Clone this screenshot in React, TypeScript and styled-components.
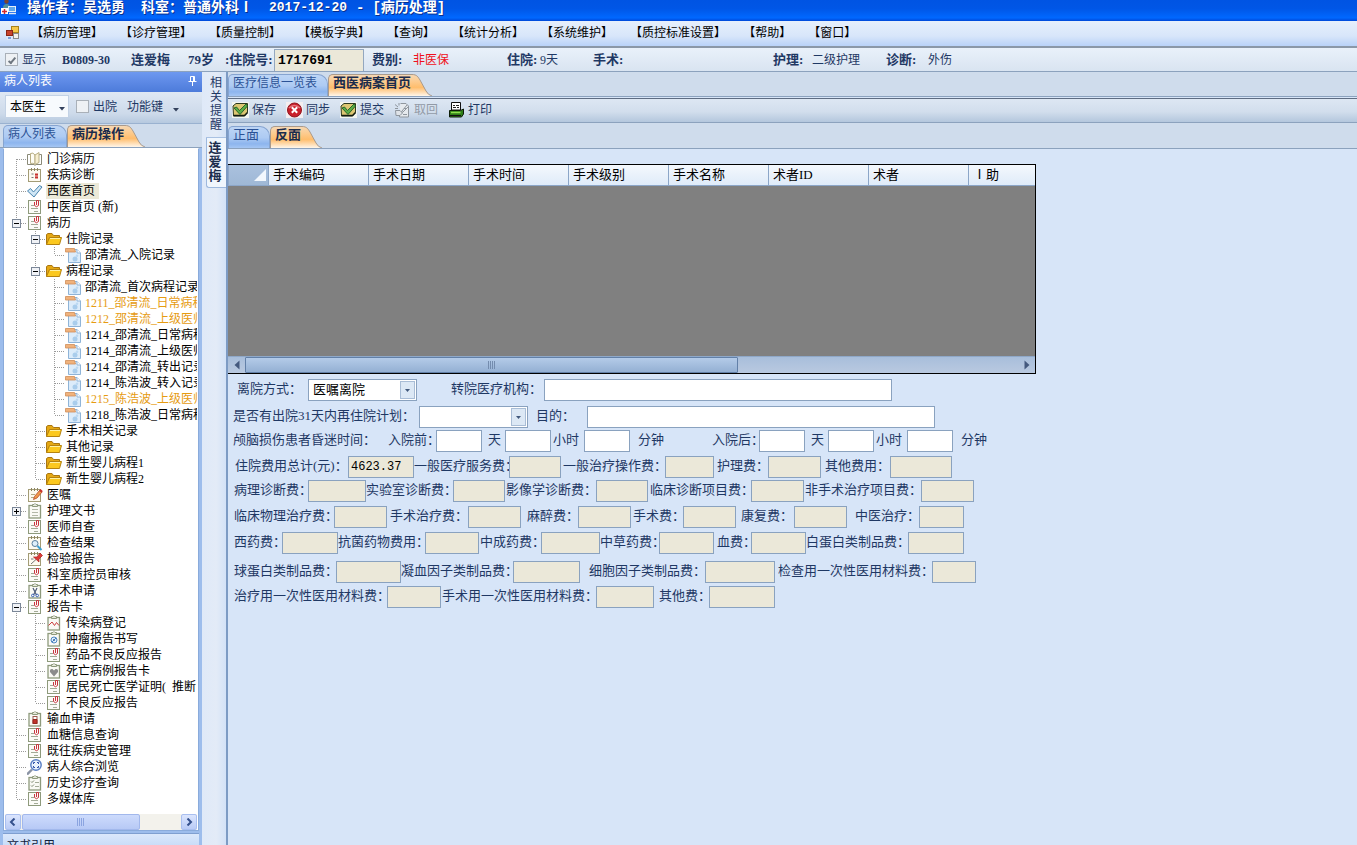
import React from "react";
import styled, { createGlobalStyle, css } from "styled-components";

const GlobalStyle = createGlobalStyle`
  *, *::before, *::after { box-sizing: border-box; }
  html, body { margin: 0; padding: 0; }
  body {
    background: #d7e5f8;
    color: #1f3864;
    font: 12px/16px "Liberation Serif", "Noto Sans CJK SC", sans-serif;
    overflow: hidden;
  }
  button, input, select { font: inherit; color: inherit; margin: 0; border-radius: 0; }
  button { padding: 0; border: 0; background: none; }
  svg { flex: none; }
`;

const Page = styled.div`
  display: flex;
  flex-direction: column;
  height: 100vh;
  overflow: hidden;
  white-space: nowrap;
`;

/* ---------- window title and main menu ---------- */

const TitleBar = styled.header`
  display: flex;
  flex: none;
  height: 21px;
  padding-left: 1px;
  color: #fff;
  font-size: 14px;
  line-height: 16px;
  font-weight: bold;
  font-family: "Liberation Mono", "Noto Sans CJK SC", monospace;
  background: linear-gradient(#0054e3, #0056e6 40%, #0068ff 85%, #0048d8);
  text-shadow: 1px 1px 0 #0a2f8c;
  svg { margin-right: 10px; }
`;

const TitlePart = styled.span`
  margin-right: 16px;
`;

const TitleDate = styled.span`
  font-size: 13px;
  margin-right: 9px;
`;

const TitleDash = styled.span`
  margin-right: 8px;
`;

const MenuBar = styled.nav`
  display: flex;
  flex: none;
  align-items: center;
  gap: 17px;
  height: 27px;
  padding: 0 0 2px 6px;
  color: #000;
  border-bottom: 2px solid #8b98a8;
  background: linear-gradient(#e6effc, #d8e6fa 60%, #b9d2f8);
`;

const MenuIcon = styled.span`
  display: flex;
  width: 8px;
`;

const MenuButton = styled.button`
  line-height: 20px;
`;

/* ---------- patient summary ---------- */

const PatientBar = styled.section`
  display: grid;
  flex: none;
  grid-template-columns: 57px 69px 57px 37px 49px 98px 41px 94px 33px 53px 180px 39px 74px 42px 1fr;
  align-items: center;
  height: 24px;
  padding-left: 5px;
  background: linear-gradient(#e9f1fa, #d9e4f1);
  border-bottom: 1px solid #8ca2bd;
`;

const Strong = styled.span`
  font-size: 13px;
  font-weight: bold;
`;

const BedNo = styled.span`
  font-weight: bold;
`;

const Red = styled.span`
  color: #f01020;
`;

const CheckLabel = styled.label`
  display: flex;
  align-items: center;
  gap: 4px;
`;

const CheckBox = styled.input`
  appearance: none;
  flex: none;
  width: 13px;
  height: 13px;
  border: 1px solid #a9b0b8;
  background: #eef1f4;
  display: grid;
  place-items: center;
  &:checked::before {
    content: "";
    width: 4px;
    height: 8px;
    border: solid #6f7780;
    border-width: 0 2px 2px 0;
    transform: rotate(40deg);
  }
`;

const AdmissionInput = styled.input`
  width: 90px;
  height: 22px;
  padding: 0 3px;
  border: 1px solid #93a7bf;
  border-bottom: 0;
  background: #ebe8d9;
  color: #000;
  font: bold 13px/18px "Liberation Mono", monospace;
`;

/* ---------- body ---------- */

const Body = styled.div`
  display: flex;
  flex: 1;
  min-height: 0;
`;

const Side = styled.aside`
  display: flex;
  flex: none;
  flex-direction: column;
  width: 202px;
  overflow: hidden;
  background: #9dbdec;
`;

const SideHeader = styled.div`
  display: flex;
  flex: none;
  align-items: center;
  justify-content: space-between;
  height: 20px;
  padding: 0 5px 2px 4px;
  color: #fff;
  background: linear-gradient(#6d98f0, #4d7bda);
`;

const SideTools = styled.div`
  display: flex;
  flex: none;
  align-items: center;
  height: 32px;
  padding: 0 0 2px 5px;
  background: linear-gradient(#dfe8f4, #cddaea 70%, #b6c9df);
  border-bottom: 1px solid #9ab2d0;
`;

const DoctorSelect = styled.span`
  position: relative;
  margin-right: 7px;
  select {
    appearance: none;
    display: block;
    width: 64px;
    height: 23px;
    padding: 0 4px;
    color: #000;
    background: #f7fafd;
    border: 1px solid #c3d2e5;
  }
  svg { position: absolute; right: 4px; top: 12px; pointer-events: none; }
`;

const FunctionButton = styled.button`
  display: flex;
  align-items: center;
  gap: 10px;
  margin-left: 10px;
  svg { margin-top: 6px; }
`;

/* ---------- tabs ---------- */

const TabStrip = styled.div<{ $h: number; $in?: number }>`
  display: flex;
  flex: none;
  align-items: flex-end;
  height: ${(p) => p.$h}px;
  padding-left: ${(p) => p.$in ?? 0}px;
  background: #cfdcec;
  border-bottom: 1px solid #8ca2bd;
`;

const TabShape = styled.button<{ $on?: boolean; $large?: boolean }>`
  position: relative;
  height: 22px;
  padding: 0 4px 6px;
  border: 1px solid #86a4d0;
  border-bottom: 0;
  border-top-left-radius: 5px;
  color: #2b5296;
  font-size: ${(p) => (p.$large ? 13 : 12)}px;
  line-height: 16px;
  background: linear-gradient(#bdd5f5, #aecbf3 50%, #8db5ee 80%, #a5c6f3);
  ${(p) =>
    p.$on
      ? css`
          z-index: 1;
          margin-right: 18px;
          border-color: #a99a8c;
          border-right: 0;
          padding-right: 1px;
          color: #1b2c4c;
          font-size: 13px;
          font-weight: bold;
          background: linear-gradient(#f6d8b4, #fdca8b 35%, #ffbd6c 60%, #fff6ea);
        `
      : css`
          padding-right: 10px;
          border-top-right-radius: 10px;
        `}
  svg { position: absolute; left: 100%; top: -1px; }
`;

function Tab({ on, large, children }: { on?: boolean; large?: boolean; children: string }) {
  const id = React.useId();
  return (
    <TabShape type="button" $on={on} $large={large}>
      {children}
      {on && (
        <svg width="20" height="22" viewBox="0 0 20 22">
          <defs>
            <linearGradient id={id} x1="0" y1="0" x2="0" y2="1">
              <stop offset="0" stopColor="#f6d8b4" />
              <stop offset=".35" stopColor="#fdca8b" />
              <stop offset=".6" stopColor="#ffbd6c" />
              <stop offset="1" stopColor="#fff6ea" />
            </linearGradient>
          </defs>
          <path d="M0 .5C5 .5 6 3 8 6L14 17Q16 21 20 22H0Z" fill={`url(#${id})`} />
          <path d="M0 .5C5 .5 6 3 8 6L14 17Q16 21 20 22" fill="none" stroke="#a99a8c" />
        </svg>
      )}
    </TabShape>
  );
}

/* ---------- record tree ---------- */

type Kind =
  | "book" | "calendar" | "check" | "clip" | "folder" | "doc" | "pencil" | "board" | "search"
  | "pin" | "scissors" | "chart" | "target" | "heart" | "blood" | "lens" | "list";

type Node = {
  text: string;
  icon: Kind;
  open?: boolean;
  closed?: boolean;
  selected?: boolean;
  amber?: boolean;
  kids?: Node[];
};

const doc = (text: string, amber = false): Node => ({ text, icon: "doc", amber });

const records: Node[] = [
  { text: "门诊病历", icon: "book" },
  { text: "疾病诊断", icon: "calendar" },
  { text: "西医首页", icon: "check", selected: true },
  { text: "中医首页 (新)", icon: "clip" },
  {
    text: "病历", icon: "clip", open: true,
    kids: [
      { text: "住院记录", icon: "folder", open: true, kids: [doc("邵清流_入院记录")] },
      {
        text: "病程记录", icon: "folder", open: true,
        kids: [
          doc("邵清流_首次病程记录"),
          doc("1211_邵清流_日常病程", true),
          doc("1212_邵清流_上级医师", true),
          doc("1214_邵清流_日常病程"),
          doc("1214_邵清流_上级医师"),
          doc("1214_邵清流_转出记录"),
          doc("1214_陈浩波_转入记录"),
          doc("1215_陈浩波_上级医师", true),
          doc("1218_陈浩波_日常病程"),
        ],
      },
      { text: "手术相关记录", icon: "folder" },
      { text: "其他记录", icon: "folder" },
      { text: "新生婴儿病程1", icon: "folder" },
      { text: "新生婴儿病程2", icon: "folder" },
    ],
  },
  { text: "医嘱", icon: "pencil" },
  { text: "护理文书", icon: "board", closed: true },
  { text: "医师自查", icon: "clip" },
  { text: "检查结果", icon: "search" },
  { text: "检验报告", icon: "pin" },
  { text: "科室质控员审核", icon: "clip" },
  { text: "手术申请", icon: "scissors" },
  {
    text: "报告卡", icon: "clip", open: true,
    kids: [
      { text: "传染病登记", icon: "chart" },
      { text: "肿瘤报告书写", icon: "target" },
      { text: "药品不良反应报告", icon: "clip" },
      { text: "死亡病例报告卡", icon: "heart" },
      { text: "居民死亡医学证明(  推断", icon: "clip" },
      { text: "不良反应报告", icon: "clip" },
    ],
  },
  { text: "输血申请", icon: "blood" },
  { text: "血糖信息查询", icon: "clip" },
  { text: "既往疾病史管理", icon: "clip" },
  { text: "病人综合浏览", icon: "lens" },
  { text: "历史诊疗查询", icon: "list" },
  { text: "多媒体库", icon: "clip" },
];

const TreePane = styled.div`
  display: flex;
  flex: none;
  flex-direction: column;
  margin: 0 3px 0 3px;
  padding: 2px 1px 0;
  border: 1px solid #8aabdb;
  border-top-color: #fff;
  background: #fff;
`;

const TreeList = styled.ul`
  list-style: none;
  margin: 0 0 7px;
  padding: 0 0 0 2px;
  color: #000;
  overflow: hidden;
`;

const SubList = styled.ul`
  list-style: none;
  margin: 0;
  padding: 0;
`;

const TreeRow = styled.div<{ $amber?: boolean }>`
  display: flex;
  align-items: center;
  height: 16px;
  color: ${(p) => (p.$amber ? "#e69b12" : "#000")};
`;

const TreeText = styled.span<{ $on?: boolean }>`
  margin-left: 3px;
  padding: 0 4px 0 1px;
  line-height: 16px;
  white-space: pre;
  background: ${(p) => (p.$on ? "#ece9d8" : "transparent")};
`;

const GlyphSvg = styled.svg`
  margin-left: 1px;
`;

function Guide({ up, down, branch, box }: { up: boolean; down: boolean; branch?: boolean; box?: "+" | "-" }) {
  const line = { stroke: "#9a9a9a", strokeDasharray: "1 1" };
  return (
    <svg width="19" height="16" viewBox="0 0 19 16" shapeRendering="crispEdges">
      {up && <path d="M9.5 0V8" {...line} />}
      {down && <path d="M9.5 8V16" {...line} />}
      {branch && <path d="M10 8.5H19" {...line} />}
      {box && (
        <>
          <rect x="5.5" y="4.5" width="8" height="8" fill="#f0f2f6" stroke="#7b8798" />
          <path d={box === "+" ? "M7 8.5H12M9.5 6V11" : "M7 8.5H12"} stroke="#000" />
        </>
      )}
    </svg>
  );
}

const Paper = () => (
  <>
    <rect x="1.5" y="1.5" width="12" height="13" fill="#fbfbf7" stroke="#8e9a7c" />
    <path d="M4 6.5H7M4 9.5H11M7 12.5H11" stroke="#a3aa97" />
  </>
);

const Board = () => (
  <>
    <rect x="2" y="2.5" width="11.5" height="12.500" fill="#fafaf5" stroke="#8e9a7c" strokeWidth="1.300" />
    <path d="M5.5 3.5V1.5H7L8 .5L9 1.5H10.500V3.500Z" fill="#e6e8dc" stroke="#8e9a7c" />
  </>
);

const Pad = () => (
  <>
    <rect x="1.500" y="2.500" width="12" height="12" fill="#fdfaf0" stroke="#a39c76" />
    <path d="M4.500 1V4M7.500 1V4M10.500 1V4" stroke="#8c8560" />
  </>
);

const drawings: Record<Kind, React.ReactNode> = {
  book: (
    <>
      <path d="M.5 3.500H3L8 5L13 3.500H14.500V13.500H9L8 14.500L7 13.500H.5Z" fill="#fff" stroke="#8a8a78" />
      <path d="M3.500 2.500Q6 1 8 4V13.500Q6 11.500 3.500 12.500Z" fill="#fffdf4" stroke="#b8ae84" />
      <path d="M8 4L12 1.500V11.500L8 13.500Z" fill="#f8efd0" stroke="#b8ae84" />
    </>
  ),
  calendar: (
    <>
      <Pad />
      <path d="M4.500 7H6.500M4.500 10.500H6.500" stroke="#777" />
      <path d="M8 6.500H11V11.500H8Z" fill="#c8322c" />
      <path d="M8 9H11" stroke="#fff" strokeWidth=".7" />
    </>
  ),
  check: <path d="M.5 8L3.500 5.500L6.500 9L12.500 2.500L15 4L7 14Z" fill="#cfe6f5" stroke="#4683ae" />,
  clip: (
    <>
      <Paper />
      <path d="M7.500 3V6.500Q9.500 9 11.500 6.500V1.500H9.500V6" fill="none" stroke="#c8343f" />
    </>
  ),
  folder: (
    <>
      <path d="M.5 13.500V3.500L2 2.500H6L7.500 4.500H13.500V7" fill="#e5a814" stroke="#a97611" />
      <path d="M.5 13.500L3.500 6.500H15.500L13.500 13.500Z" fill="#fbc81f" stroke="#b5820f" />
      <path d="M4 7.500H14" stroke="#fff0a0" />
    </>
  ),
  doc: (
    <>
      <path d="M3.500 2.500H12L15.500 6V15.500H3.500Z" fill="#dcecfa" stroke="#8fb4d8" />
      <path d="M12 2.500V6H15.500" fill="#fff" stroke="#8fb4d8" />
      <path d="M.5 1.500H9.500L10.500 5H.5Z" fill="#f0b27c" stroke="#cf8e58" strokeWidth=".8" />
      <circle cx="10" cy="12" r="2.500" fill="#a9cdec" />
      <circle cx="12" cy="8.800" r="1.300" fill="#bcd9f2" />
    </>
  ),
  pencil: (
    <>
      <Pad />
      <path d="M4 7.500H8M4 10.500H7" stroke="#b4ab84" />
      <path d="M6.500 12.500L7.500 9.500L12.500 3.500L15 5L10 11Z" fill="#ef9a4a" stroke="#b5482c" strokeWidth=".8" />
      <path d="M12 4L13.500 2L15.700 4L15 5.500Z" fill="#c8322c" />
    </>
  ),
  board: (
    <>
      <Board />
      <path d="M5 6.500H11M5 9.500H11M5 12.500H11" stroke="#b3b8a8" />
    </>
  ),
  search: (
    <>
      <Pad />
      <circle cx="8" cy="8.500" r="3" fill="#dff0fb" stroke="#5b7f9c" />
      <path d="M10.500 11L14.500 15" stroke="#3c9fd0" strokeWidth="2" />
    </>
  ),
  pin: (
    <>
      <Pad />
      <path d="M4 13L9 8.500M4 8H6.500" stroke="#777" />
      <path d="M6.500 6L10 6L13 2L15.500 4.500L12 8V11Z" fill="#dd3a36" stroke="#a82222" strokeWidth=".7" />
    </>
  ),
  scissors: (
    <>
      <Board />
      <path d="M6 5L9.500 12M10 5L6.500 12" stroke="#4d5a78" strokeWidth="1.200" />
      <circle cx="5.800" cy="12.500" r="1.300" fill="none" stroke="#3b62b5" />
      <circle cx="10.200" cy="12.500" r="1.300" fill="none" stroke="#3b62b5" />
    </>
  ),
  chart: (
    <>
      <Board />
      <path d="M2.500 10.500L6 7L8.500 10.500L10.500 7.500L13 10.500" fill="none" stroke="#cc4040" />
    </>
  ),
  target: (
    <>
      <Board />
      <circle cx="8" cy="9" r="3" fill="#e2f0fb" stroke="#4d86c2" />
      <path d="M6 11L10 7" stroke="#4d86c2" />
      <circle cx="8" cy="9" r="1" fill="#3a6ea8" />
    </>
  ),
  heart: (
    <>
      <Board />
      <path d="M8 13.500L4 9Q3.500 5.500 6.500 6L8 7.500L9.500 6Q12.500 5.500 12 9Z" fill="#8b8b8b" />
    </>
  ),
  blood: (
    <>
      <Board />
      <rect x="6" y="5.500" width="4" height="7" fill="#fff" stroke="#9a5a50" />
      <path d="M6 8.500H10V12.500H6Z" fill="#c0332b" stroke="#962820" />
    </>
  ),
  lens: (
    <>
      <path d="M5 10.500L0 15.500" stroke="#8a93a4" strokeWidth="2.400" />
      <circle cx="9" cy="6" r="5.200" fill="#e9f2fd" stroke="#5a7fc4" strokeWidth="1.400" />
      <path d="M6.500 5V3.500H8M10 3.500H11.500V5M11.500 7V8.500H10M8 8.500H6.500V7" fill="none" stroke="#2b4ea8" />
    </>
  ),
  list: (
    <>
      <Board />
      <path d="M4 6.500L5 7.500L7 5.500M4 10.500L5 11.500L7 9.500" fill="none" stroke="#7d8870" />
      <path d="M8 7.500H12M8 11.500H12" stroke="#a3aa97" />
    </>
  ),
};

const Glyph = ({ kind }: { kind: Kind }) => (
  <GlyphSvg width="16" height="16" viewBox="0 0 16 16">{drawings[kind]}</GlyphSvg>
);

function Branch({ nodes, rails = [] }: { nodes: Node[]; rails?: boolean[] }) {
  return (
    <>
      {nodes.map((n, i) => {
        const more = i < nodes.length - 1;
        return (
          <li key={i}>
            <TreeRow $amber={n.amber}>
              {rails.map((r, k) => (
                <Guide key={k} up={r} down={r} />
              ))}
              <Guide
                up={i > 0 || rails.length > 0}
                down={more}
                branch
                box={n.open ? "-" : n.closed ? "+" : undefined}
              />
              <Glyph kind={n.icon} />
              <TreeText $on={n.selected}>{n.text}</TreeText>
            </TreeRow>
            {n.kids && (
              <SubList>
                <Branch nodes={n.kids} rails={[...rails, more]} />
              </SubList>
            )}
          </li>
        );
      })}
    </>
  );
}

const TreeScroll = styled.div`
  display: flex;
  height: 16px;
  background: #f3f2ec;
`;

const TreeScrollButton = styled.button`
  display: grid;
  place-items: center;
  width: 16px;
  border: 1px solid #a9bff0;
  border-radius: 2px;
  background: linear-gradient(#dbe5fd, #b9cbf6);
`;

const TreeThumb = styled.div`
  display: grid;
  place-items: center;
  flex: 0 0 118px;
  margin: 0 auto 0 1px;
  border: 1px solid #a2b8ec;
  border-radius: 2px;
  background: linear-gradient(#cddbfc, #b7c9f5);
`;

const NextPanel = styled.div`
  flex: none;
  height: 26px;
  margin: 2px 3px 0;
  padding: 4px 4px 0;
  color: #10203c;
  border-top: 1px solid #7f9fd0;
  background: linear-gradient(#dbe8fb, #b4cff5);
`;

/* ---------- vertical tabs ---------- */

const Rail = styled.div`
  display: flex;
  flex: none;
  flex-direction: column;
  width: 26px;
  padding-left: 4px;
  background: linear-gradient(90deg, #dfe9f8 0, #e3ebf7 60%, #d3e2f7);
  border-right: 2px solid #7d9bc4;
`;

const RailTab = styled.button<{ $on?: boolean }>`
  width: 20px;
  padding: 4px 3px 5px;
  line-height: 14px;
  text-align: center;
  white-space: normal;
  border-bottom: 1px solid #a9c1e2;
  ${(p) =>
    p.$on &&
    css`
      padding: 3px 4px 4px 1px;
      font-size: 13px;
      font-weight: bold;
      color: #1b2c4c;
      background: #f0f6fd;
      border: 1px solid #9db8dd;
      border-width: 0 0 1px 1px;
      border-radius: 0 0 0 3px;
    `}
`;

/* ---------- main work area ---------- */

const Main = styled.main`
  display: flex;
  flex: 1;
  flex-direction: column;
  min-width: 0;
`;

const ToolBar = styled.div`
  display: flex;
  flex: none;
  align-items: center;
  gap: 10px;
  height: 25px;
  margin-top: 1px;
  padding: 0 0 2px 4px;
  border-top: 1px solid #5f6d82;
  border-bottom: 1px solid #8ca2bd;
  background: linear-gradient(#dde7f3, #d2deed 55%, #b4c7dd);
`;

const ToolButton = styled.button<{ $off?: boolean }>`
  display: flex;
  align-items: center;
  gap: 3px;
  height: 20px;
  color: ${(p) => (p.$off ? "#929aa6" : "#1f3864")};
`;

const Sheet = styled.div`
  flex: 1;
  padding: 15px 0 0 0;
  background: #d7e5f8;
`;

const GridBox = styled.div`
  display: flex;
  flex-direction: column;
  width: 808px;
  border: 1px solid #000;
  border-left: 0;
`;

const GridBody = styled.div`
  min-height: 191px;
  background: #808080;
`;

const GridTable = styled.table`
  width: 100%;
  table-layout: fixed;
  border-collapse: separate;
  border-spacing: 0;
  color: #000;
  font-size: 13px;
  th {
    height: 21px;
    padding: 0 4px 1px;
    overflow: hidden;
    font-weight: normal;
    text-align: left;
    line-height: 16px;
    border: solid #8ca6c8;
    border-width: 0 0 1px 1px;
    background: linear-gradient(#f4f8fd, #dfebf9);
  }
  th:first-child { width: 40px; padding: 0; background: linear-gradient(#aac1de, #9fb8d6); }
  th:last-child { width: 67px; }
  svg { display: block; margin-left: auto; }
`;

const GridScroll = styled.div`
  display: flex;
  height: 17px;
  background: linear-gradient(#a8bedb, #b9c9e0);
  border-top: 1px solid #8fa8c8;
`;

const GridArrow = styled.button`
  display: grid;
  place-items: center;
  width: 17px;
`;

const GridThumb = styled.div`
  display: grid;
  place-items: center;
  flex: 0 0 493px;
  margin-right: auto;
  border: 1px solid #6280a8;
  border-radius: 1px;
  background: linear-gradient(#b4cbe8, #94b0d3);
`;

const FormRow = styled.div<{ $top: number }>`
  display: flex;
  align-items: center;
  height: 22px;
  margin-top: ${(p) => p.$top}px;
  font-size: 13px;
`;

const Field = styled.label<{ $gap: number }>`
  display: flex;
  align-items: center;
  flex: none;
  margin-left: ${(p) => p.$gap}px;
`;

const Caption = styled.span<{ $w: number }>`
  width: ${(p) => p.$w}px;
  line-height: 18px;
  padding-bottom: 2px;
`;

const Box = styled.input<{ $w: number; $fee?: boolean }>`
  width: ${(p) => p.$w}px;
  height: 22px;
  padding: 0 2px;
  color: #000;
  font: 12px/18px "Liberation Mono", monospace;
  border: 1px solid #8aa2bf;
  background: ${(p) => (p.$fee ? "#ebe8d9" : "#fff")};
`;

const Unit = styled.span<{ $gap: number; $w: number }>`
  margin-left: ${(p) => p.$gap}px;
  width: ${(p) => p.$w}px;
  line-height: 18px;
  padding-bottom: 2px;
`;

const Choice = styled.span`
  position: relative;
  width: 109px;
  select {
    appearance: none;
    display: block;
    width: 100%;
    height: 22px;
    padding: 0 4px;
    color: #000;
    border: 1px solid #8aa2bf;
    background: #fff;
  }
  svg { position: absolute; right: 2px; top: 2px; pointer-events: none; }
`;

const DropMark = () => (
  <svg width="15" height="18" viewBox="0 0 15 18">
    <rect x=".5" y=".5" width="14" height="17" fill="#dce8f5" stroke="#a9bdd6" />
    <path d="M5 8H10L7.500 11Z" fill="#41587c" />
  </svg>
);

const SmallArrow = () => (
  <svg width="6" height="4" viewBox="0 0 6 4">
    <path d="M0 0H6L3 3.500Z" fill="#33415c" />
  </svg>
);

const Chevron = ({ left }: { left?: boolean }) => (
  <svg width="8" height="8" viewBox="0 0 8 8">
    <path d={left ? "M5.500 .5L2 4L5.500 7.500" : "M2.500 .5L6 4L2.500 7.500"} fill="none" stroke="#34508c" strokeWidth="2" />
  </svg>
);

const Triangle = ({ left }: { left?: boolean }) => (
  <svg width="6" height="10" viewBox="0 0 6 10">
    <path d={left ? "M5.500 .5V9.500L.5 5Z" : "M.5 .5V9.500L5.500 5Z"} fill="#44597e" />
  </svg>
);

const Grip = ({ color }: { color: string }) => (
  <svg width="8" height="8" viewBox="0 0 8 8" shapeRendering="crispEdges">
    <path d="M.5 0V8M2.500 0V8M4.500 0V8M6.500 0V8" stroke={color} />
  </svg>
);

const BookCheck = () => (
  <svg width="17" height="16" viewBox="0 0 17 16">
    <rect width="17" height="16" fill="#f2f5f0" />
    <path d="M1 4L4 1.500H15.500V10.500L12.500 14H1.500Z" fill="#dcc672" stroke="#2c3a20" />
    <path d="M1.500 13.500H12.500L15.500 10.500" fill="none" stroke="#141c10" strokeWidth="1.500" />
    <path d="M2 6L4.500 5L7.500 8.500L14 2L15.500 4L8 12.500Z" fill="#5cae46" stroke="#1d5c22" strokeWidth=".9" />
  </svg>
);

const RedCross = () => (
  <svg width="17" height="16" viewBox="0 0 17 16">
    <rect width="17" height="16" fill="#f4eef0" />
    <circle cx="8.500" cy="8" r="7" fill="#c9202b" stroke="#8f1620" />
    <path d="M3 6Q8 1 14 6" fill="none" stroke="#e67a80" strokeWidth="1.500" />
    <path d="M5.800 5.300L11.200 10.700M11.200 5.300L5.800 10.700" stroke="#fff" strokeWidth="2" />
  </svg>
);

const TakeBack = () => (
  <svg width="17" height="16" viewBox="0 0 17 16" fill="none" stroke="#8f969e">
    <path d="M6.500 1.500H12L14.500 4V15H5.500V12" fill="#e6eaee" />
    <path d="M1 2.500L4 5M1 6.500H4M5 1V3.500M13 3L8 9L7 11L9 10L15 4" />
    <path d="M1.500 8.500H6L8.500 11L6 13.500H2Z" fill="#dfe3e8" />
    <path d="M9 12.500H13M10 6.500H12.500" />
  </svg>
);

const Printer = () => (
  <svg width="17" height="16" viewBox="0 0 17 16">
    <path d="M3.500 .5H12.500V8H3.500Z" fill="#fff" stroke="#111" />
    <path d="M5 3.500H7M8 3.500H11M5 5.500H8M9 5.500H11" stroke="#222" />
    <path d="M1.500 8.500H12.500L15.500 7V12L13.500 15H1.500Z" fill="#2f7d18" stroke="#0d1d08" />
    <path d="M3 10.500H12.500" stroke="#8ee04c" strokeWidth="1.500" />
    <path d="M2 13.500H13" stroke="#111" />
  </svg>
);

const AppLogo = () => (
  <svg width="16" height="15" viewBox="0 0 16 15">
    <circle cx="5.500" cy="1.500" r="2.200" fill="#7a4630" />
    <path d="M2 8Q2 4 5.500 4Q9 4 9 8Z" fill="#4f8f9c" />
    <rect x="0" y="8" width="7" height="6" fill="#fff" />
    <path d="M3.500 9V14M1 11.500H6" stroke="#d22a2a" strokeWidth="1.500" />
    <rect x="7.500" y="6.500" width="7" height="5" fill="#5fa8ec" stroke="#e4eef8" />
    <path d="M8 13.500H15" stroke="#dfe8f2" strokeWidth="1.500" />
  </svg>
);

const FormLogo = () => (
  <svg width="14" height="14" viewBox="0 0 14 14">
    <rect x="5.500" y=".5" width="7" height="6" fill="#f6c84a" stroke="#a8821c" />
    <rect x=".5" y="4.500" width="6" height="5" fill="#c8432c" stroke="#8a2616" />
    <rect x="7.500" y="7.500" width="5" height="5" fill="#f4f2ea" stroke="#8b8b8b" />
    <rect x="1.500" y="10.500" width="4" height="3" fill="#7ba0dc" stroke="#dfe7f5" />
  </svg>
);

const menus = [
  "【病历管理】", "【诊疗管理】", "【质量控制】", "【模板字典】", "【查询】",
  "【统计分析】", "【系统维护】", "【质控标准设置】", "【帮助】", "【窗口】",
];

const columns = ["手术编码", "手术日期", "手术时间", "手术级别", "手术名称", "术者ID", "术者", "Ⅰ助"];

type Fee = { gap: number; name: string; cap: number; box: number; value?: string };

const fee = (gap: number, name: string, cap: number, box: number, value?: string): Fee => ({
  gap, name, cap, box, value,
});

const feeRows: { top: number; fees: Fee[] }[] = [
  { top: 4, fees: [
    fee(7, "住院费用总计(元)：", 113, 66, "4623.37"), fee(0, "一般医疗服务费：", 95, 52),
    fee(2, "一般治疗操作费：", 102, 49), fee(3, "护理费：", 51, 53), fee(4, "其他费用：", 65, 62),
  ] },
  { top: 2, fees: [
    fee(6, "病理诊断费：", 74, 58), fee(0, "实验室诊断费：", 87, 52), fee(1, "影像学诊断费：", 90, 52),
    fee(2, "临床诊断项目费：", 101, 53), fee(1, "非手术治疗项目费：", 116, 53),
  ] },
  { top: 4, fees: [
    fee(6, "临床物理治疗费：", 100, 53), fee(3, "手术治疗费：", 78, 53), fee(6, "麻醉费：", 51, 53),
    fee(2, "手术费：", 50, 53), fee(5, "康复费：", 53, 53), fee(8, "中医治疗：", 64, 45),
  ] },
  { top: 4, fees: [
    fee(6, "西药费：", 48, 56), fee(0, "抗菌药物费用：", 87, 54), fee(1, "中成药费：", 61, 59),
    fee(0, "中草药费：", 59, 55), fee(3, "血费：", 34, 55), fee(0, "白蛋白类制品费：", 102, 56),
  ] },
  { top: 7, fees: [
    fee(6, "球蛋白类制品费：", 102, 65), fee(0, "凝血因子类制品费：", 112, 67),
    fee(9, "细胞因子类制品费：", 116, 70), fee(3, "检查用一次性医用材料费：", 154, 44),
  ] },
  { top: 3, fees: [
    fee(6, "治疗用一次性医用材料费：", 153, 54), fee(1, "手术用一次性医用材料费：", 154, 58),
    fee(5, "其他费：", 50, 66),
  ] },
];

function ComaTime({ gap, name, cap }: { gap: number; name: string; cap: number }) {
  return (
    <>
      <Field $gap={gap}>
        <Caption $w={cap}>{name}</Caption>
        <Box $w={46} />
      </Field>
      <Unit $gap={6} $w={17}>天</Unit>
      <Box $w={46} aria-label={name + "小时"} />
      <Unit $gap={2} $w={31}>小时</Unit>
      <Box $w={46} aria-label={name + "分钟"} />
      <Unit $gap={8} $w={26}>分钟</Unit>
    </>
  );
}

export default function App() {
  return (
    <Page>
      <GlobalStyle />
      <TitleBar>
        <AppLogo />
        <TitlePart>操作者：吴选勇</TitlePart>
        <TitlePart>科室：普通外科Ⅰ</TitlePart>
        <TitleDate>2017-12-20</TitleDate>
        <TitleDash>-</TitleDash>
        <span>[病历处理]</span>
      </TitleBar>
      <MenuBar>
        <MenuIcon><FormLogo /></MenuIcon>
        {menus.map((m) => (
          <MenuButton type="button" key={m}>{m}</MenuButton>
        ))}
      </MenuBar>
      <PatientBar>
        <CheckLabel><CheckBox type="checkbox" defaultChecked />显示</CheckLabel>
        <BedNo>B0809-30</BedNo>
        <Strong>连爱梅</Strong>
        <Strong>79岁</Strong>
        <Strong as="label" htmlFor="admission">:住院号:</Strong>
        <AdmissionInput id="admission" defaultValue="1717691" />
        <Strong>费别:</Strong>
        <Red>非医保</Red>
        <Strong>住院:</Strong>
        <span>9天</span>
        <Strong>手术:</Strong>
        <Strong>护理:</Strong>
        <span>二级护理</span>
        <Strong>诊断:</Strong>
        <span>外伤</span>
      </PatientBar>
      <Body>
        <Side>
          <SideHeader>
            病人列表
            <svg width="9" height="10" viewBox="0 0 9 10" fill="none" stroke="#fff">
              <path d="M2.500 .5H6.500V5.500H2.500ZM5.500 1V5M.5 5.500H8.500M4.500 6V10" />
            </svg>
          </SideHeader>
          <SideTools>
            <DoctorSelect>
              <select aria-label="医生范围"><option>本医生</option></select>
              <SmallArrow />
            </DoctorSelect>
            <CheckLabel><CheckBox type="checkbox" />出院</CheckLabel>
            <FunctionButton type="button">功能键<SmallArrow /></FunctionButton>
          </SideTools>
          <TabStrip $h={24} $in={3}>
            <Tab>病人列表</Tab>
            <Tab on>病历操作</Tab>
          </TabStrip>
          <TreePane>
            <TreeList><Branch nodes={records} /></TreeList>
            <TreeScroll>
              <TreeScrollButton type="button" aria-label="向左"><Chevron left /></TreeScrollButton>
              <TreeThumb><Grip color="#8ba4e0" /></TreeThumb>
              <TreeScrollButton type="button" aria-label="向右"><Chevron /></TreeScrollButton>
            </TreeScroll>
          </TreePane>
          <NextPanel>文书引用</NextPanel>
        </Side>
        <Rail>
          <RailTab type="button">相关提醒</RailTab>
          <RailTab type="button" $on>连爱梅</RailTab>
        </Rail>
        <Main>
          <TabStrip $h={25}>
            <Tab>医疗信息一览表</Tab>
            <Tab on>西医病案首页</Tab>
          </TabStrip>
          <ToolBar>
            <ToolButton type="button"><BookCheck />保存</ToolButton>
            <ToolButton type="button"><RedCross />同步</ToolButton>
            <ToolButton type="button"><BookCheck />提交</ToolButton>
            <ToolButton type="button" $off disabled><TakeBack />取回</ToolButton>
            <ToolButton type="button"><Printer />打印</ToolButton>
          </ToolBar>
          <TabStrip $h={26}>
            <Tab large>正面</Tab>
            <Tab on>反面</Tab>
          </TabStrip>
          <Sheet>
            <GridBox>
              <GridBody>
                <GridTable>
                  <thead>
                    <tr>
                      <th aria-label="全选">
                        <svg width="14" height="14" viewBox="0 0 14 14">
                          <path d="M12 1V13H0Z" fill="#f2f7fd" />
                        </svg>
                      </th>
                      {columns.map((c) => <th key={c} scope="col">{c}</th>)}
                    </tr>
                  </thead>
                </GridTable>
              </GridBody>
              <GridScroll>
                <GridArrow type="button" aria-label="向左"><Triangle left /></GridArrow>
                <GridThumb><Grip color="#748cae" /></GridThumb>
                <GridArrow type="button" aria-label="向右"><Triangle /></GridArrow>
              </GridScroll>
            </GridBox>
            <FormRow $top={5}>
              <Field $gap={9}>
                <Caption $w={71}>离院方式：</Caption>
                <Choice><select><option>医嘱离院</option></select><DropMark /></Choice>
              </Field>
              <Field $gap={34}>
                <Caption $w={93}>转院医疗机构：</Caption>
                <Box $w={348} />
              </Field>
            </FormRow>
            <FormRow $top={5}>
              <Field $gap={5}>
                <Caption $w={186}>是否有出院31天内再住院计划：</Caption>
                <Choice><select><option></option></select><DropMark /></Choice>
              </Field>
              <Field $gap={8}>
                <Caption $w={51}>目的：</Caption>
                <Box $w={348} />
              </Field>
            </FormRow>
            <FormRow $top={2}>
              <Unit $gap={5} $w={143}>颅脑损伤患者昏迷时间：</Unit>
              <ComaTime gap={12} name="入院前：" cap={48} />
              <ComaTime gap={48} name="入院后：" cap={47} />
            </FormRow>
            {feeRows.map((row, i) => (
              <FormRow key={i} $top={row.top}>
                {row.fees.map((f) => (
                  <Field key={f.name} $gap={f.gap}>
                    <Caption $w={f.cap}>{f.name}</Caption>
                    <Box $w={f.box} $fee defaultValue={f.value} />
                  </Field>
                ))}
              </FormRow>
            ))}
          </Sheet>
        </Main>
      </Body>
    </Page>
  );
}
